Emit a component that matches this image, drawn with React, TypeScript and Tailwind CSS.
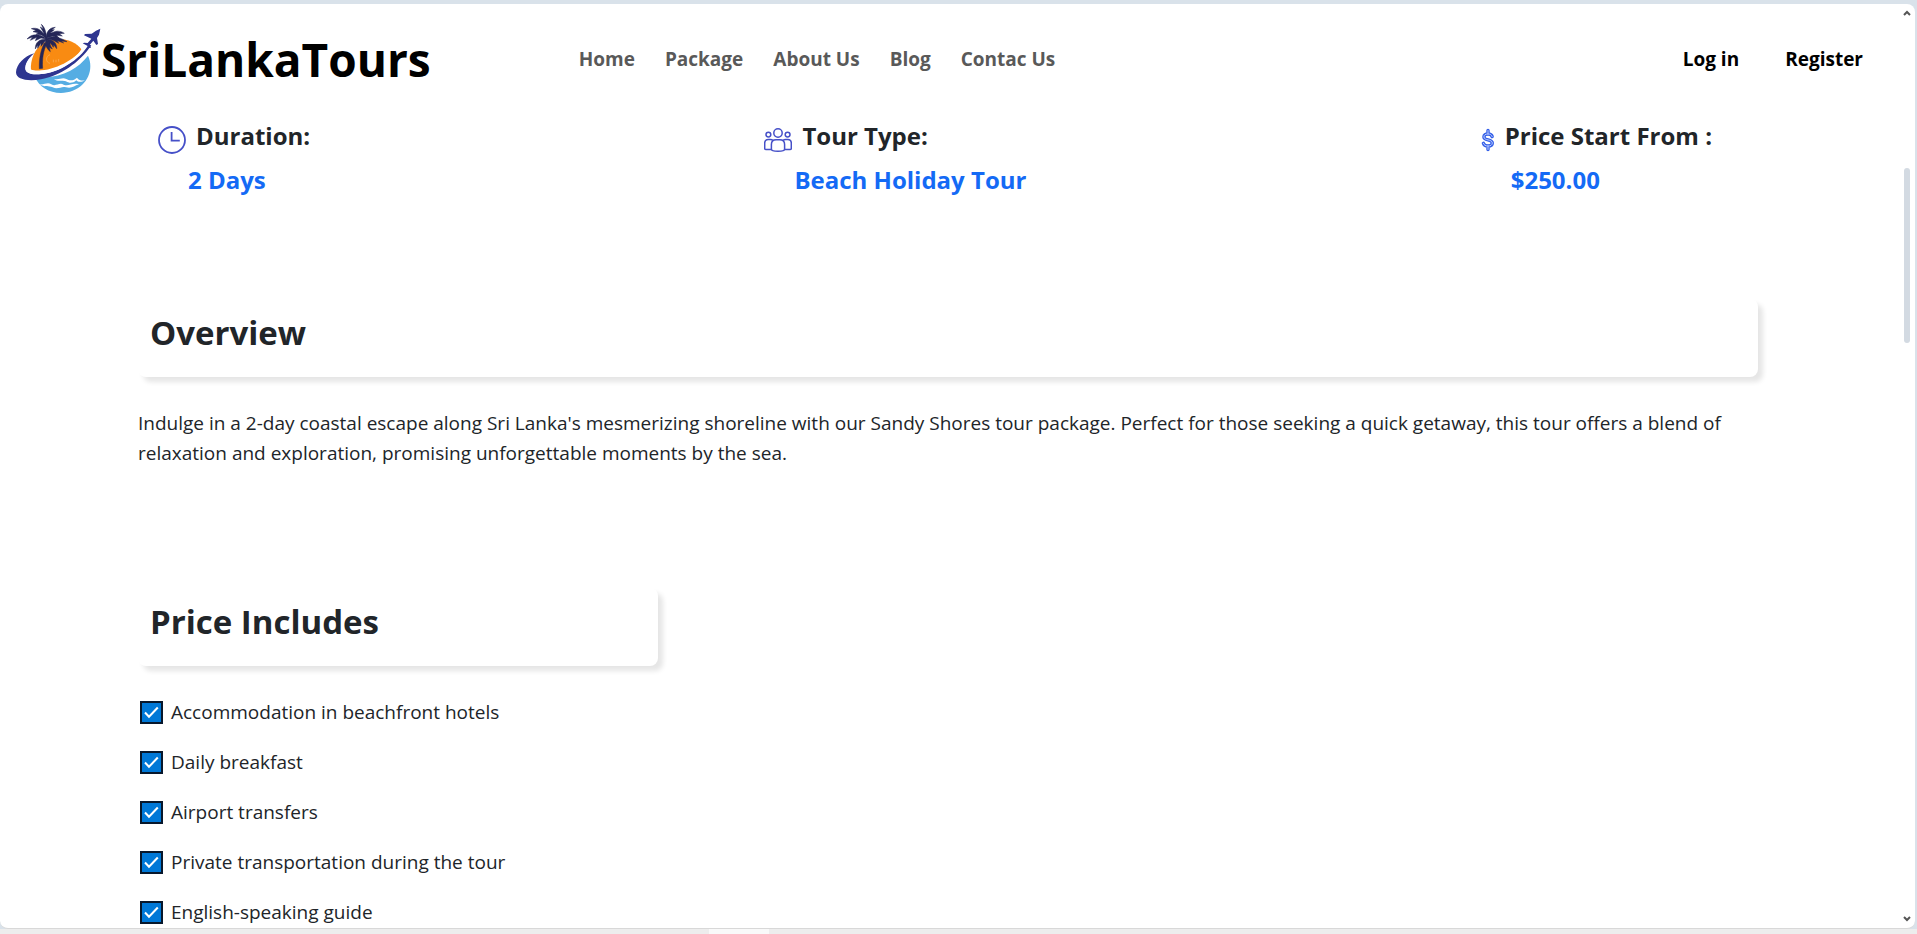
import type { ReactNode } from "react";

const navLinks = ["Home", "Package", "About Us", "Blog", "Contac Us"];

const included = [
  "Accommodation in beachfront hotels",
  "Daily breakfast",
  "Airport transfers",
  "Private transportation during the tour",
  "English-speaking guide",
];

function Logo() {
  return (
    <svg viewBox="48 38 255 216" className="h-[72px] w-[85px] shrink-0" aria-hidden="true">
      <path d="M104 198C116 230 147 248 183 248C234 248 271 211 271 168C271 156 269 147 264 136C232 178 174 210 104 198Z" fill="#55ade3" />
      <path d="M93 180C90 150 104 112 134 96C172 76 224 88 244 117C222 154 158 197 93 180Z" fill="#f98b12" />
      <path d="M150 133C136 138 136 156 150 159M160 148v8M168 148v8M176 146v8" fill="none" stroke="#fbb666" strokeWidth="2" />
      <path d="M103 129C72 137 49 163 48 186C48 208 84 214 123 207C180 197 238 158 274 105L264 103C235 148 176 187 124 191C91 194 75 187 76 172C77 157 88 141 103 129Z" fill="#2e3590" />
      <path d="M94 139C74 164 80 184 124 180C177 176 230 142 256 107L265 104C238 149 178 187 124 191C90 194 75 187 76 172C77 160 83 149 94 139Z" fill="#fff" />
      <path d="M118 222C134 224 142 214 154 222C168 230 178 215 191 223C207 230 214 216 237 222C222 226 216 236 198 231C185 226 174 239 158 231C145 225 135 232 118 222Z" fill="#fff" />
      <path d="M161 205C176 211 186 199 199 206C211 214 223 209 231 202C238 211 246 212 255 210C244 216 235 216 229 210C218 220 207 219 198 213C187 207 174 217 161 205Z" fill="#fff" />
      <g fill="#242657" stroke="#242657" strokeWidth="1.5">
        <path d="M133 98C122 121 117 143 118 175L128 174C126 144 130 122 140 101Z" />
        <path d="M140 84C138 64 134 50 124 42L130 56L121 50L130 66C132 76 134 83 140 87Z" />
        <path d="M139 84C128 59 112 50 94 55L108 60L99 64L115 67L108 72L124 74Z" />
        <path d="M139 86C119 68 94 70 81 86L98 80L91 90L110 81L106 91L123 83Z" />
        <path d="M139 87C120 84 105 96 106 116L113 104L113 114L123 99L123 108L134 94Z" />
        <path d="M138 82C140 61 151 51 166 51L155 58L163 58L151 68L159 68L146 79Z" />
        <path d="M138 84C154 61 176 57 193 69L178 70L187 77L170 75L177 83L158 78Z" />
        <path d="M138 86C157 73 180 81 201 94L184 92L191 98L172 91L176 99L158 89Z" />
        <path d="M140 85C161 87 171 100 170 115L161 103L160 111L151 97L150 106Z" />
        <path d="M137 85C133 101 139 114 151 124L148 111L157 116L148 100L142 87Z" />
      </g>
      <path d="M301 55L297 73L291 83L294 101L289 104L280 91L269 104L273 112L269 113L263 107L248 99L253 97L263 98L274 85L252 75L255 71L275 70L288 61Z" fill="#2e3590" />
    </svg>
  );
}

function ClockIcon() {
  return (
    <svg viewBox="0 0 28 28" className="h-7 w-7" fill="none" stroke="#4650c8" strokeWidth="1.8" aria-hidden="true">
      <circle cx="14" cy="14" r="13" />
      <path d="M13.6 6v8.6h8.2" />
    </svg>
  );
}

function PeopleIcon() {
  return (
    <svg viewBox="0 0 28 28" className="h-7 w-7" fill="none" stroke="#4650c8" strokeWidth="1.5" aria-hidden="true">
      <circle cx="14" cy="7" r="4.2" />
      <circle cx="4.4" cy="8.6" r="2.4" />
      <circle cx="23.6" cy="8.6" r="2.4" />
      <path d="M7.4 23.2V18.6c0-3 2.1-4.8 4.8-4.8h3.6c2.7 0 4.8 1.8 4.8 4.8v4.6c0 1.4-1.6 2-6.6 2s-6.6-.6-6.6-2Z" />
      <path d="M9 14.4c-.8-.7-1.6-1-2.6-1H4.2C2 13.4.7 15 .7 17.2v5.2c0 .6.6 1 1.4 1h5.3M19 14.4c.8-.7 1.6-1 2.6-1h2.2c2.2 0 3.5 1.6 3.5 3.8v5.2c0 .6-.6 1-1.4 1h-5.3" />
    </svg>
  );
}

function DollarIcon() {
  const outline = "M7 2.5v3.5M7 18v3.5M11.2 8.6C10.6 6.8 9.2 6 7 6C4.6 6 2.9 7 2.9 8.9C2.9 12.8 11.3 11 11.3 15C11.3 17 9.5 18 7 18C4.6 18 3 17.2 2.4 15.3";
  return (
    <svg viewBox="0 0 14 24" className="h-6 w-[14px]" fill="none" strokeLinecap="round" strokeLinejoin="round" aria-hidden="true">
      <path d={outline} stroke="#3560e8" strokeWidth="3.4" />
      <path d={outline} stroke="#c9d6ff" strokeWidth="0.9" />
    </svg>
  );
}

function Fact({ icon, label, value }: { icon: ReactNode; label: string; value: string }) {
  return (
    <div>
      <div className="flex items-center gap-[10px]">
        <span className="pt-2">{icon}</span>
        <h2 className="text-2xl leading-9 font-bold">{label}</h2>
      </div>
      <p className="mt-2 pl-[30px] text-2xl leading-9 font-bold text-[#146af5]">{value}</p>
    </div>
  );
}

function SectionTitle({ children }: { children: ReactNode }) {
  return (
    <div className="rounded-lg bg-white px-3 pt-[10px] pb-5 shadow-[5px_5px_5px_rgba(0,0,0,0.1)]">
      <h2 className="text-[33px] leading-[48px] font-bold">{children}</h2>
    </div>
  );
}

function Scrollbar() {
  return (
    <div className="flex w-4 shrink-0 flex-col items-center pt-[6px] pb-[6px]" aria-hidden="true">
      <svg viewBox="0 0 8 6" className="h-[6px] w-2" fill="none" stroke="#555" strokeWidth="2">
        <path d="M1 5l3-3 3 3" />
      </svg>
      <div className="flex w-full flex-1 flex-col items-center">
        <div className="grow-[150]" />
        <div className="w-[6px] grow-[173] rounded-full bg-[#d3dae2]" />
        <div className="grow-[567]" />
      </div>
      <svg viewBox="0 0 8 6" className="h-[6px] w-2" fill="none" stroke="#555" strokeWidth="2">
        <path d="M1 1l3 3 3-3" />
      </svg>
    </div>
  );
}

export default function App() {
  return (
    <div className="flex h-screen flex-col overflow-hidden bg-[#d9e2ea] pt-1 font-['Open_Sans','Noto_Sans',sans-serif] text-[#212529]">
      <div className="mr-[2px] flex min-h-0 flex-1 overflow-hidden rounded-lg border-b border-[#d8d8d8] bg-white">
        <div className="min-w-0 flex-1 overflow-hidden">
          <header className="flex h-[110px] items-center pr-9 pl-4">
            <a href="#home" className="flex items-center text-[46px] font-bold text-black">
              <Logo />
              <span>SriLankaTours</span>
            </a>
            <nav className="ml-[148px] flex gap-[30px] text-[19px] font-bold text-[#595959]">
              {navLinks.map((link) => (
                <a key={link} href="#section">{link}</a>
              ))}
            </nav>
            <div className="ml-auto flex gap-[46px] text-[19px] font-bold text-black">
              <a href="#login">Log in</a>
              <a href="#register">Register</a>
            </div>
          </header>

          <main className="pr-[141px] pl-[138px]">
            <section className="flex justify-between pt-1 pr-[46px] pl-5">
              <Fact icon={<ClockIcon />} label="Duration:" value="2 Days" />
              <Fact icon={<PeopleIcon />} label="Tour Type:" value="Beach Holiday Tour" />
              <Fact icon={<DollarIcon />} label="Price Start From :" value="$250.00" />
            </section>

            <section className="mt-[101px]">
              <SectionTitle>Overview</SectionTitle>
              <p className="mt-[31px] text-[19px] leading-[30px]">
                Indulge in a 2-day coastal escape along Sri Lanka's mesmerizing shoreline with our Sandy Shores tour
                package. Perfect for those seeking a quick getaway, this tour offers a blend of relaxation and
                exploration, promising unforgettable moments by the sea.
              </p>
            </section>

            <section className="mt-[120px]">
              <div className="w-[520px]">
                <SectionTitle>Price Includes</SectionTitle>
              </div>
              <ul className="mt-[31px] flex flex-col gap-5">
                {included.map((item) => (
                  <li key={item}>
                    <label className="flex items-center gap-2 pl-[2px] text-[19px] leading-[30px]">
                      <span className="grid">
                        <input
                          type="checkbox"
                          defaultChecked
                          className="peer col-start-1 row-start-1 h-[23px] w-[23px] appearance-none border-2 border-[#08182c] bg-white checked:bg-[#0078d7]"
                        />
                        <svg
                          viewBox="0 0 23 23"
                          className="pointer-events-none invisible col-start-1 row-start-1 h-[23px] w-[23px] peer-checked:visible"
                          fill="none"
                          stroke="#fff"
                          strokeWidth="2"
                          aria-hidden="true"
                        >
                          <path d="M5 11.5l4 4.3 8.8-9.3" />
                        </svg>
                      </span>
                      {item}
                    </label>
                  </li>
                ))}
              </ul>
            </section>
          </main>
        </div>
        <Scrollbar />
      </div>
      <div className="flex h-[5px] shrink-0 bg-[#ededed]" aria-hidden="true">
        <div className="w-[37%]" />
        <div className="w-[60px] bg-[#f9f9f9]" />
      </div>
    </div>
  );
}
